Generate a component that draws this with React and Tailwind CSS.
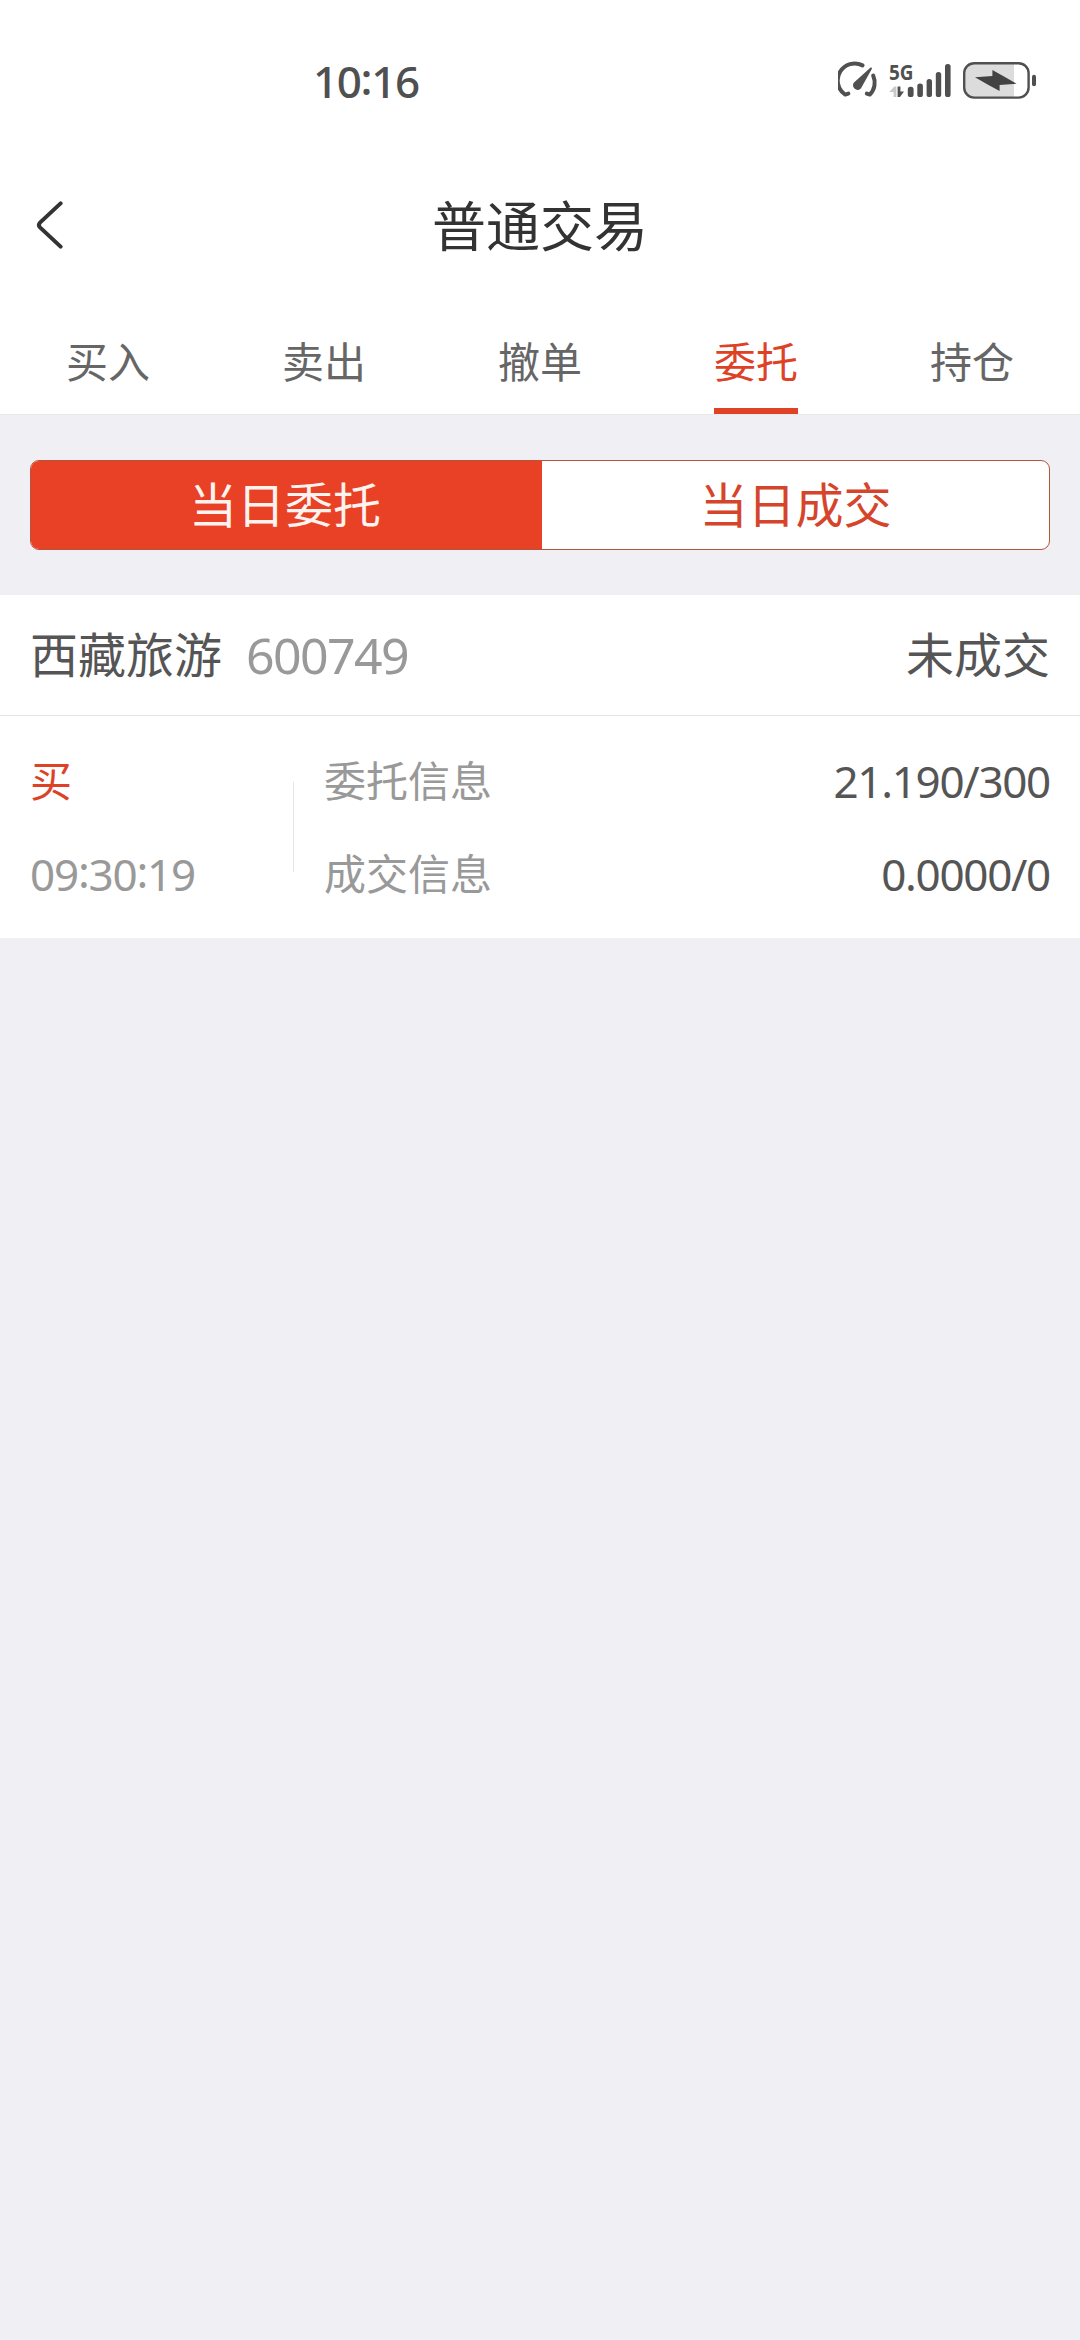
import { useState } from "react";

const tabs = ["买入", "卖出", "撤单", "委托", "持仓"];

const orders = [
  {
    name: "西藏旅游",
    code: "600749",
    status: "未成交",
    side: "买",
    time: ["09", "30", "19"],
    order: "21.190/300",
    deal: "0.0000/0",
  },
];

const GaugeIcon = () => (
  <svg width="40" height="40" viewBox="0 -1 40 40" fill="none" stroke="#505050" strokeLinecap="round">
    <path d="M24.5 3.4 A17 17 0 0 0 7.2 32.6 L10.3 31.6" strokeWidth="4" strokeLinejoin="round" />
    <path d="M35.2 13.6 A17 17 0 0 1 31.8 32.6 L28.8 31.6" strokeWidth="4" strokeLinejoin="round" />
    <path d="M32.6 5.6 C33.6 5.2 34.2 6 33.8 6.9 L24 24.5 A4.6 4.6 0 1 1 17.4 19.2 Z" fill="#505050" stroke="none" />
  </svg>
);

const SignalIcon = () => (
  <svg width="64" height="40" viewBox="0 -1 64 40">
    <path d="M0.2 30 L5.4 24.6 H7.4 V35 H4.6 V30 Z" fill="#c9c9c9" />
    <path d="M8.6 24.6 H11.4 V29.6 H15 L11 35 H8.6 Z" fill="#505050" />
    <g fill="#505050">
      <rect x="18.8" y="24.8" width="5.8" height="10.2" rx="2.6" />
      <rect x="28.3" y="21.4" width="5.6" height="13.6" rx="2.6" />
      <rect x="37.6" y="17" width="5.4" height="18" rx="2.6" />
      <rect x="46.8" y="10" width="5.4" height="25" rx="2.6" />
      <rect x="56" y="2" width="5.6" height="33" rx="2.6" />
    </g>
  </svg>
);

const BatteryIcon = () => (
  <svg width="76" height="40" viewBox="0 0 76 40">
    <path d="M13 3 H52 V36 H13 A10 10 0 0 1 3 26 V13 A10 10 0 0 1 13 3 Z" fill="#dcdcdc" />
    <rect x="2.2" y="2.2" width="64.4" height="34.4" rx="10" fill="none" stroke="#505050" strokeWidth="2.4" />
    <path d="M13 16.2 L30.4 15 V9 L42 15.6 L54.6 22.8 L37.6 24 V30 L26 23.8 Z" fill="#424242" />
    <rect x="70" y="13.8" width="4" height="11.4" rx="2" fill="#505050" />
  </svg>
);

const StatusBar = () => (
  <div className="flex h-[162px] items-center pr-[42px] pl-[313px] text-[#505050]">
    <span className="text-[44px] leading-none font-medium tracking-[-1.4px]">
      10<span className="relative -top-[3px]">:</span>16
    </span>
    <div className="ml-auto flex items-center">
      <GaugeIcon />
      <div className="relative ml-[11px]">
        <SignalIcon />
        <span className="absolute top-px left-0 origin-left scale-x-[0.9] text-[21px] leading-[21px] font-bold">5G</span>
      </div>
      <div className="ml-[9px]">
        <BatteryIcon />
      </div>
    </div>
  </div>
);

const Header = () => (
  <header className="flex h-[126px] items-center justify-between px-9 font-['Noto_Sans_CJK_SC',sans-serif]">
    <button className="w-[60px]">
      <svg width="28" height="50" viewBox="0 0 28 50" fill="none" stroke="#333333" strokeWidth="4" strokeLinecap="round">
        <path d="M24.6 3.4 L4 22.6 Q1.8 25 4 27.4 L24.6 46.6" />
      </svg>
    </button>
    <h1 className="pb-[3px] text-[54px] leading-none text-[#333333]">普通交易</h1>
    <div className="w-[60px]" />
  </header>
);

const OrderCard = ({ order }) => (
  <div className="bg-white">
    <div className="flex h-[121px] items-center justify-between border-b border-[#e5e5e5] px-[30px] text-[48px] leading-none text-[#555555]">
      <div className="flex items-center">
        <span>{order.name}</span>
        <span className="ml-6 text-[50px] tracking-[-1.6px] text-[#999999]">{order.code}</span>
      </div>
      <span>{order.status}</span>
    </div>

    <div className="flex h-[222px] items-center px-[30px] text-[42px] leading-none text-[#999999]">
      <div className="flex w-[263px] flex-col gap-[51px]">
        <span className="text-[#dd4227]">{order.side}</span>
        <span className="text-[44px] leading-[42px] tracking-[-1.2px]">
          {order.time[0]}
          <span className="relative -top-[3px]">:</span>
          {order.time[1]}
          <span className="relative -top-[3px]">:</span>
          {order.time[2]}
        </span>
      </div>
      <div className="h-[90px] w-px bg-[#e5e5e5]" />
      <div className="ml-[30px] flex flex-1 flex-col gap-[51px]">
        <div className="flex justify-between">
          <span>委托信息</span>
          <span className="text-[44px] leading-[42px] tracking-[-1.3px] text-[#555555]">{order.order}</span>
        </div>
        <div className="flex justify-between">
          <span>成交信息</span>
          <span className="text-[44px] leading-[42px] tracking-[-1.3px] text-[#555555]">{order.deal}</span>
        </div>
      </div>
    </div>
  </div>
);

export default function App() {
  const [activeTab, setActiveTab] = useState("委托");

  return (
    <div className="min-h-[2340px] w-[1080px] bg-[#efeff4] font-['Noto_Sans','Noto_Sans_CJK_SC',sans-serif]">
      <div className="bg-white">
        <StatusBar />
        <Header />

        {/* tabs */}
        <nav className="flex h-[127px] border-b border-[#e8e8e8]">
          {tabs.map((tab) => (
            <button
              key={tab}
              onClick={() => setActiveTab(tab)}
              className="flex flex-1 justify-center text-[42px] leading-none"
            >
              <span
                className={
                  tab === activeTab
                    ? "h-[126px] border-b-6 border-[#e04226] pt-[53px] text-[#dd4227]"
                    : "h-[126px] pt-[53px] text-[#666666]"
                }
              >
                {tab}
              </span>
            </button>
          ))}
        </nav>
      </div>

      {/* segment */}
      <div className="px-[30px] py-[45px]">
        <div className="flex h-[90px] overflow-hidden rounded-[9px] border border-[#b5533e] bg-white text-[48px] leading-none">
          <button className="w-[511px] bg-[#e84125] pr-[3px] text-[#fff3f0]">当日委托</button>
          <button className="flex-1 text-[#d5452b]">当日成交</button>
        </div>
      </div>

      {orders.map((order) => (
        <OrderCard key={order.code} order={order} />
      ))}
    </div>
  );
}
